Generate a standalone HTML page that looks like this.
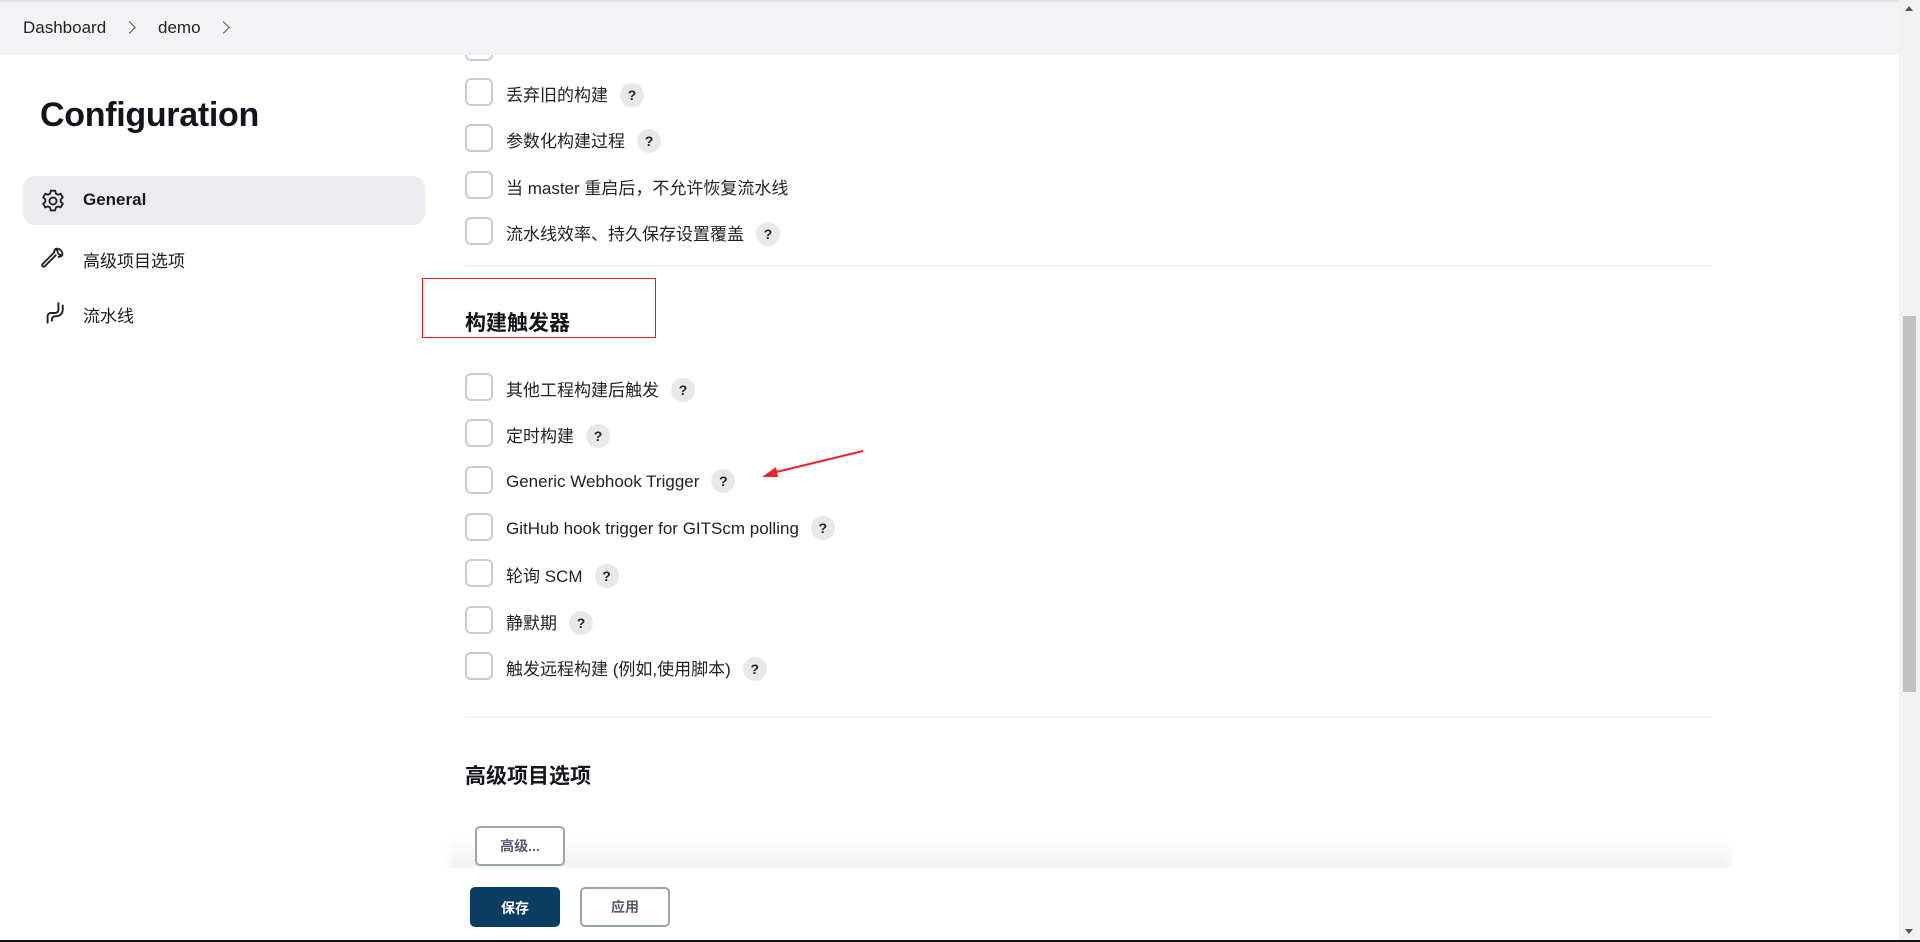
<!DOCTYPE html>
<html><head><meta charset="utf-8"><style>
*{box-sizing:border-box;margin:0;padding:0}
body{width:1920px;height:942px;overflow:hidden;background:#fff;font-family:"Liberation Sans","Noto Sans CJK SC",sans-serif;color:#1a1a1f;position:relative}
.bc{position:absolute;left:0;top:0;width:1899px;height:55px;background:#f3f3f6;border-top:2px solid #e2e2e6;font-size:17px;color:#222;z-index:5}
.bc span{position:absolute;top:16px}
.chev{position:absolute;top:21px;width:9px;height:9px;border-right:1.5px solid #555;border-top:1.5px solid #555;transform:rotate(45deg)}
h1{position:absolute;left:40px;top:96px;font-size:34px;font-weight:700;color:#14141a;letter-spacing:-0.3px}
.nav{position:absolute;left:23px;width:402px;height:49px;border-radius:12px;font-size:17px}
.nav.act{background:#ececf0;font-weight:700}
.nav svg{position:absolute;left:17px;top:12px}
.nav span{position:absolute;left:60px;top:14px}
.row{position:absolute;left:465px;height:28px;font-size:17px;color:#222}
.cb{position:absolute;left:0;top:0;width:28px;height:28px;border:2px solid #c6ccd2;border-radius:6px;background:#fff}
.row .t{position:absolute;left:41px;top:3px;white-space:nowrap}
.q{display:inline-block;width:24px;height:24px;border-radius:50%;background:#e8e8ea;text-align:center;font-weight:700;font-size:14px;line-height:24px;margin-left:12px;vertical-align:1px;color:#222}
.sep{position:absolute;left:465px;width:1247px;height:2px;background:#f0f0f3}
h2{position:absolute;left:465px;font-size:21px;font-weight:700;color:#14141a}
.btn{position:absolute;border:2px solid #9aa4ae;border-radius:5px;background:#fff;color:#555a70;font-size:14px;font-weight:700;text-align:center}
</style></head><body>
<div class="bc"><span style="left:23px">Dashboard</span><div class="chev" style="left:125px"></div><span style="left:158px">demo</span><div class="chev" style="left:219px"></div></div>
<h1>Configuration</h1>
<div class="nav act" style="top:176px"><svg width="26" height="26" viewBox="0 0 24 24" fill="none" stroke="#222" stroke-width="1.7" stroke-linejoin="round"><path d="M10 2.5h4l.6 2.6 2 1.1 2.5-.9 2 3.4-2 1.8v2.2l2 1.8-2 3.4-2.5-.9-2 1.1-.6 2.6h-4l-.6-2.6-2-1.1-2.5.9-2-3.4 2-1.8v-2.2l-2-1.8 2-3.4 2.5.9 2-1.1z"/><circle cx="12" cy="12" r="3.3"/></svg><span>General</span></div>
<div class="nav" style="top:233px"><svg width="26" height="26" viewBox="0 0 24 24" fill="none" stroke="#222" stroke-width="1.7" stroke-linejoin="round"><path d="M14.5 3.5a5 5 0 0 1 6 6l-2.5-.5-1.5-1.5-.5-2.5zM15 9l-11 11a1.6 1.6 0 0 1-2-2l11-11"/><path d="M14.5 3.5a5 5 0 0 0-1.5 4M20.5 9.5a5 5 0 0 1-4 1.5"/></svg><span>高级项目选项</span></div>
<div class="nav" style="top:288px"><svg width="26" height="26" viewBox="0 0 24 24" fill="none" stroke="#222" stroke-width="1.8" stroke-linecap="round"><path d="M17 3v6a3 3 0 0 1-3 3h-4a3 3 0 0 0-3 3v6M21 5v4a6 6 0 0 1-6 6h-1a3 3 0 0 0-3 3v1"/></svg><span>流水线</span></div>

<div class="row" style="top:33px"><div class="cb"></div></div>
<div class="row" style="top:78px"><div class="cb"></div><div class="t">丢弃旧的构建<span class="q">?</span></div></div>
<div class="row" style="top:124px"><div class="cb"></div><div class="t">参数化构建过程<span class="q">?</span></div></div>
<div class="row" style="top:171px"><div class="cb"></div><div class="t">当 master 重启后，不允许恢复流水线</div></div>
<div class="row" style="top:217px"><div class="cb"></div><div class="t">流水线效率、持久保存设置覆盖<span class="q">?</span></div></div>
<div class="sep" style="top:265px"></div>
<div style="position:absolute;left:422px;top:278px;width:234px;height:60px;border:1.5px solid #e02020"></div>
<h2 style="top:307px">构建触发器</h2>
<div class="row" style="top:373px"><div class="cb"></div><div class="t">其他工程构建后触发<span class="q">?</span></div></div>
<div class="row" style="top:419px"><div class="cb"></div><div class="t">定时构建<span class="q">?</span></div></div>
<div class="row" style="top:466px"><div class="cb"></div><div class="t">Generic Webhook Trigger<span class="q">?</span></div></div>
<div class="row" style="top:513px"><div class="cb"></div><div class="t">GitHub hook trigger for GITScm polling<span class="q">?</span></div></div>
<div class="row" style="top:559px"><div class="cb"></div><div class="t">轮询 SCM<span class="q">?</span></div></div>
<div class="row" style="top:606px"><div class="cb"></div><div class="t">静默期<span class="q">?</span></div></div>
<div class="row" style="top:652px"><div class="cb"></div><div class="t">触发远程构建 (例如,使用脚本)<span class="q">?</span></div></div>
<svg style="position:absolute;left:0;top:0" width="1920" height="942"><line x1="863" y1="451" x2="772" y2="473" stroke="#e8262a" stroke-width="2"/><path d="M762 477l14-10 2 10z" fill="#e8262a"/></svg>
<div class="sep" style="top:716px"></div>
<h2 style="top:760px">高级项目选项</h2>
<div style="position:absolute;left:450px;top:838px;width:1280px;height:32px;background:linear-gradient(#fff,#efeff0);filter:blur(4px)"></div>
<div class="btn" style="left:475px;top:826px;width:90px;height:40px;line-height:36px">高级...</div>
<div style="position:absolute;left:0;top:868px;width:1899px;height:73px;background:#fff"></div>
<div class="btn" style="left:470px;top:887px;width:90px;height:40px;line-height:38px;background:#0b3d62;border-color:#0b3d62;color:#fff">保存</div>
<div class="btn" style="left:580px;top:887px;width:90px;height:40px;line-height:36px">应用</div>
<div style="position:absolute;left:1899px;top:0;width:21px;height:941px;background:#f1f1f1;z-index:6"></div>
<div style="position:absolute;left:1903px;top:316px;width:13px;height:376px;background:#c1c1c1;z-index:7"></div>
<div style="position:absolute;left:1905px;top:6px;border:4px solid transparent;border-bottom:5px solid #555;border-top:0;z-index:7"></div>
<div style="position:absolute;left:1905px;top:929px;border:4px solid transparent;border-top:5px solid #555;border-bottom:0;z-index:7"></div>
<div style="position:absolute;left:0;top:940px;width:1920px;height:2px;background:#111;z-index:8"></div>
</body></html>
